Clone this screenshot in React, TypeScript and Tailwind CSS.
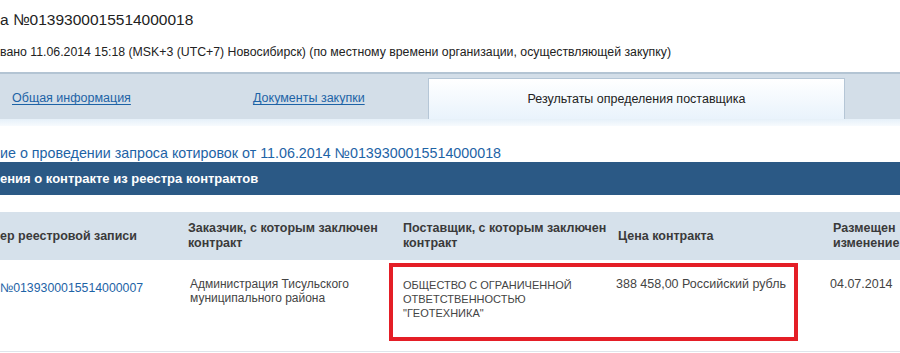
import React from "react";

export default function App() {
  const font = { fontFamily: '"Liberation Sans", Arial, sans-serif' } as React.CSSProperties;
  return (
    <div className="w-[900px] h-[353px] overflow-hidden bg-white text-[#333]" style={font}>
      {/* title */}
      <div className="pt-[8px] h-[44px] text-[15.5px] leading-[24px] text-[#222] whitespace-nowrap">
        а №0139300015514000018
      </div>
      <div className="h-[28px] text-[12.3px] leading-[16px] text-[#222] whitespace-nowrap">
        вано 11.06.2014 15:18 (MSK+3 (UTC+7) Новосибирск) (по местному времени организации, осуществляющей закупку)
      </div>
      {/* tabs */}
      <div className="border-t-2 border-[#b3c4d3] bg-[#d3dee8] h-[47px] flex items-end">
        <div className="w-[241px] h-[41px] flex items-center pl-[12px]">
          <a className="text-[12.5px] text-[#1d63a6] underline underline-offset-2">Общая информация</a>
        </div>
        <div className="w-[187px] h-[41px] flex items-center pl-[12px]">
          <a className="text-[12.5px] text-[#1d63a6] underline underline-offset-2">Документы закупки</a>
        </div>
        <div className="w-[417px] h-[41px] flex items-center justify-center border-l border-t border-r border-[#b5c6d6] bg-gradient-to-b from-white to-[#e9f3fc]">
          <span className="text-[12.5px] text-[#222]">Результаты определения поставщика</span>
        </div>
        <div className="flex-1 h-[41px]" />
      </div>
      <div className="h-[7px] bg-gradient-to-b from-[#e6f0f9] to-[#f7fbfe]" />
      {/* link */}
      <div className="h-[36px] pt-[18px] text-[14.3px] leading-[18px] text-[#1d63a6] whitespace-nowrap">
        ие о проведении запроса котировок от 11.06.2014 №0139300015514000018
      </div>
      {/* dark bar */}
      <div className="h-[33px] bg-[#2b5985] flex items-center text-white font-bold text-[13px] whitespace-nowrap">
        ения о контракте из реестра контрактов
      </div>
      {/* table */}
      <div className="mt-[17px]">
        <div className="grid grid-cols-[176px_215px_215px_215px_1fr] h-[48px] bg-[#d6e1eb] text-[12.5px] font-bold leading-[15px] text-[#3a3a3a]">
          <div className="flex items-center whitespace-nowrap">ер реестровой записи</div>
          <div className="flex items-center pl-[12px] whitespace-nowrap">
            <div>Заказчик, с которым заключен<br />контракт</div>
          </div>
          <div className="flex items-center pl-[12px] whitespace-nowrap">
            <div>Поставщик, с которым заключен<br />контракт</div>
          </div>
          <div className="flex items-center pl-[12px]">Цена контракта</div>
          <div className="flex items-center pl-[12px] whitespace-nowrap overflow-hidden">
            <div>Размещен<br />изменение</div>
          </div>
        </div>
        <div className="relative grid grid-cols-[176px_215px_215px_215px_1fr] h-[92px] border-b border-[#dfe5eb] text-[12px] leading-[14px] text-[#444]">
          <div className="pt-[21px] text-[12.3px] text-[#1d63a6] whitespace-nowrap">№0139300015514000007</div>
          <div className="pt-[17px] pl-[14px]">Администрация Тисульского муниципального района</div>
          <div className="pt-[18px] pl-[12px] text-[11px] leading-[14px] pr-[24px]">ОБЩЕСТВО С ОГРАНИЧЕННОЙ ОТВЕТСТВЕННОСТЬЮ "ГЕОТЕХНИКА"</div>
          <div className="pt-[17px] pl-[10px] text-[12.5px] whitespace-nowrap">388 458,00 Российский рубль</div>
          <div className="pt-[17px] pl-[9px] text-[12.5px]">04.07.2014</div>
          <div className="absolute left-[389px] top-[3px] w-[409px] h-[78px] border-4 border-[#e41e26]" />
        </div>
      </div>
    </div>
  );
}
